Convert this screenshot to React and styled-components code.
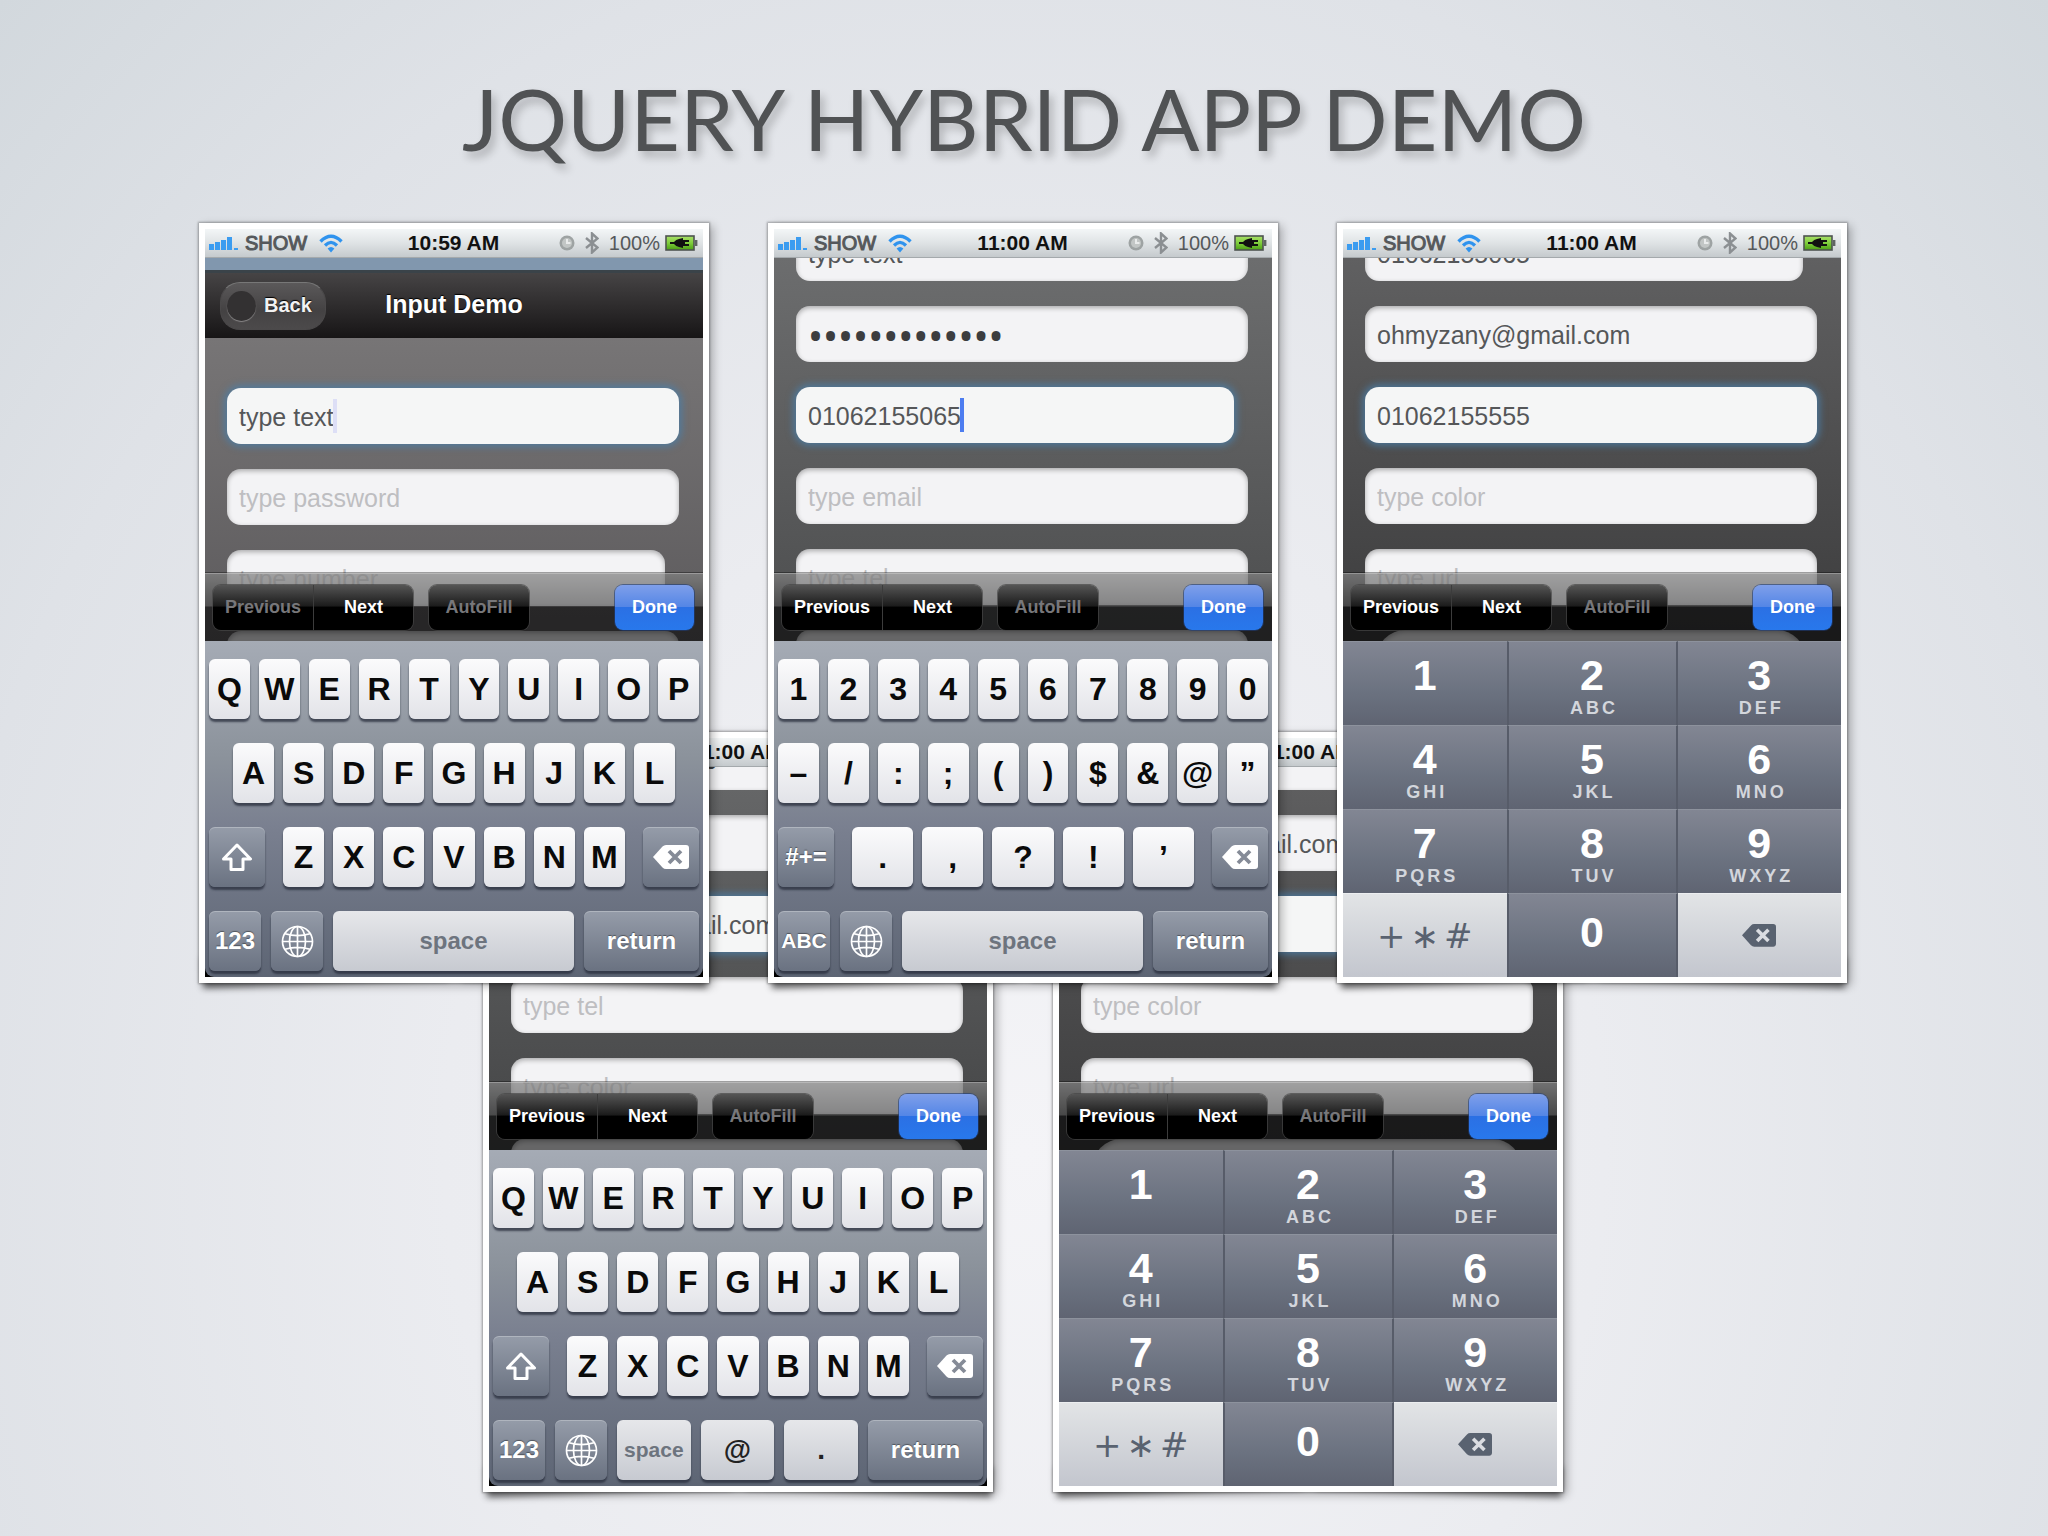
import React from "react";
import styled, { createGlobalStyle, css } from "styled-components";

const GlobalStyle = createGlobalStyle`
  * {
    box-sizing: border-box;
  }

  body {
    margin: 0;
    font-family: "Liberation Sans", Arial, sans-serif;
  }

  button,
  input {
    font-family: inherit;
    margin: 0;
    border: 0;
    outline: 0;
  }
`;

/* ---------- slide ---------- */

const Slide = styled.main`
  min-height: 100vh;
  padding-bottom: 40px;
  background: radial-gradient(
    ellipse at 50% 75%,
    #f4f4f7 0%,
    #ebecf0 40%,
    #dfe2e7 75%,
    #d2d8dd 100%
  );
`;

const Title = styled.h1`
  margin: 0;
  padding-top: 58px;
  height: 223px;
  color: #505254;
  font-family: Lato, "Open Sans", sans-serif;
  font-size: 86px;
  font-weight: 400;
  line-height: 120px;
  text-align: center;
  white-space: nowrap;
  text-shadow: 4px 6px 8px rgba(0, 0, 0, 0.22);
`;

const FrontRow = styled.section`
  position: relative;
  z-index: 1;
  display: grid;
  grid-template-columns: repeat(3, 1fr);
  gap: 59px;
  margin: 0 201px 0 199px;
`;

const BackRow = styled.section`
  display: grid;
  grid-template-columns: repeat(2, 1fr);
  gap: 60px;
  margin: -251px 485px 0 483px;
`;

/* ---------- photo frame with lifted corners ---------- */

const Photo = styled.article`
  position: relative;
  isolation: isolate;

  &::before,
  &::after {
    content: "";
    position: absolute;
    z-index: -1;
    bottom: 14px;
    width: 48%;
    height: 30px;
    box-shadow: 0 15px 6px rgba(0, 0, 0, 0.5);
  }

  &::before {
    left: 3px;
    transform: rotate(-2deg);
  }

  &::after {
    right: 1px;
    transform: rotate(2deg);
  }
`;

const Frame = styled.div`
  border: 6px solid #fff;
  background: #000;
  box-shadow: 0 0 2px 1px rgba(0, 0, 0, 0.3), 4px 3px 9px rgba(0, 0, 0, 0.28);
`;

/* ---------- status bar ---------- */

const StatusBar = styled.header`
  display: grid;
  grid-template-columns: 1fr auto 1fr;
  align-items: center;
  height: 29px;
  padding: 0 5px 0 4px;
  background: linear-gradient(#f3f6f7, #dfe3e5 50%, #c5cacd);
  border-bottom: 1px solid #a4a9ac;
  color: #55585b;
  font-size: 20px;
  line-height: 28px;
`;

const StatusLeft = styled.div`
  display: flex;
  align-items: center;
  gap: 6px;

  svg:last-child {
    margin-left: 6px;
  }
`;

const Carrier = styled.span`
  -webkit-text-stroke: 1px #55585b;
`;

const StatusRight = styled.div`
  display: flex;
  align-items: center;
  justify-content: flex-end;
  gap: 5px;

  svg:nth-child(2) {
    margin: 0 5px;
  }
`;

const Clock = styled.time`
  color: #111;
  font-size: 21px;
  font-weight: 700;
`;

/* ---------- header ---------- */

const Strip = styled.div`
  height: 12px;
  background: #8197ae;
`;

const NavBar = styled.nav`
  display: grid;
  grid-template-columns: 1fr auto 1fr;
  align-items: center;
  height: 68px;
  padding: 0 15px;
  background: linear-gradient(#464445, #2c2a2b 55%, #171516);
  border-top: 3px solid #3a4349;
  color: #fff;
`;

const BackButton = styled.button`
  display: flex;
  align-items: center;
  gap: 8px;
  justify-self: start;
  width: 106px;
  height: 48px;
  padding: 0 6px;
  border: 1px solid #4b494a;
  border-top-color: #777;
  border-radius: 20px;
  background: linear-gradient(#5b595a, #444243 60%, #4c4a4b);
  color: #f2f2f2;
  font-size: 20px;
  font-weight: 700;
  text-shadow: 0 -1px 1px #000;
`;

const BackDot = styled.span`
  width: 29px;
  height: 30px;
  border-radius: 50%;
  background: #333132;
  box-shadow: 0 1px 1px #8a8889;
`;

const NavTitle = styled.h2`
  margin: 0;
  padding-bottom: 4px;
  font-size: 25px;
  line-height: 32px;
  text-shadow: 0 -1px 1px #000;
`;

/* ---------- form ---------- */

const Form = styled.form`
  position: relative;
  height: ${(p) => (p.$short ? "303px" : "383px")};
  padding: ${(p) => (p.$short ? "50px" : "0")} 24px 0 22px;
  overflow: hidden;
  background: ${(p) => p.$tint};
`;

const Fields = styled.div`
  display: flex;
  flex-direction: column;
  gap: 25px;
  margin-top: ${(p) => (p.$scrolled ? "-33px" : "0")};
`;

const FieldBox = styled.div`
  position: relative;
  display: flex;
  padding-right: ${(p) => (p.$narrow ? "14px" : "0")};
  ${(p) => p.$round && "padding: 0 12px;"}
`;

const Input = styled.input`
  width: 100%;
  height: 56px;
  padding: 2px 12px 0;
  border-radius: ${(p) => (p.$round ? "28px" : "14px")};
  background: #f3f3f5;
  color: #555759;
  font-size: 25px;
  line-height: 54px;
  box-shadow: inset 0 2px 5px rgba(0, 0, 0, 0.3);

  &::placeholder {
    color: #bebec1;
    opacity: 1;
  }

  &[type="password"] {
    color: #3c3d3f;
    font-family: "Noto Sans", sans-serif;
    font-size: 40px;
  }

  ${(p) =>
    p.$focused &&
    css`
      background: #f5f6f6;
      box-shadow: 0 0 7px 3px rgba(74, 127, 170, 0.75);
    `}
`;

const Caret = styled.span`
  position: absolute;
  top: 11px;
  left: ${(p) => p.$at}px;
  width: 4px;
  height: 34px;
  background: ${(p) => (p.$fading ? "#dddff6" : "#4d7df0")};
`;

/* ---------- bar over the keyboard ---------- */

const AccessoryBar = styled.div`
  position: absolute;
  left: 0;
  right: 0;
  bottom: 0;
  display: flex;
  align-items: flex-start;
  gap: 16px;
  height: 68px;
  padding: 12px 9px 0 8px;
  background: linear-gradient(
      rgba(255, 255, 255, 0.38),
      rgba(255, 255, 255, 0.2) 33px,
      rgba(255, 255, 255, 0) 34px
    ),
    rgba(0, 0, 0, 0.58);
  box-shadow: inset 0 1px 0 rgba(255, 255, 255, 0.25),
    0 -1px 0 rgba(0, 0, 0, 0.35);
`;

const BarGroup = styled.div`
  display: flex;
  border-radius: 8px;
  overflow: hidden;
  box-shadow: 0 0 0 1px rgba(70, 70, 70, 0.7);
`;

const BarButton = styled.button`
  width: 100px;
  height: 45px;
  padding: 0;
  background: linear-gradient(#555, #1c1c1c 46%, #000 50%);
  color: #fff;
  font-size: 18px;
  font-weight: 700;

  & + & {
    border-left: 1px solid #3c3c3c;
  }

  &:disabled {
    color: #77777a;
  }
`;

const DoneButton = styled(BarButton)`
  width: 79px;
  margin-left: auto;
  border-radius: 8px;
  background: linear-gradient(#7f9fea, #5486e6 48%, #2b70e4 50%, #2878ec);
  box-shadow: 0 0 0 1px rgba(30, 60, 120, 0.6);
`;

/* ---------- keyboards ---------- */

const Keyboard = styled.div`
  display: flex;
  flex-direction: column;
  gap: 24px;
  height: 336px;
  padding: 18px 4px 0;
  border-radius: 0 0 9px 9px;
  background: linear-gradient(#a5abb5, #8b929b 35%, #7a8090 55%, #5d6574);
`;

const KeyRow = styled.div`
  display: flex;
  gap: ${(p) => (p.$loose ? "10px" : "9px")};
  padding: 0 ${(p) => (p.$inset ? "24px" : "0")};
`;

const MiddleKeys = styled.div`
  display: flex;
  flex: 1;
  gap: 9px;
  margin: 0 9px;
`;

const Key = styled.button`
  display: flex;
  flex: 1;
  align-items: center;
  justify-content: center;
  min-width: 0;
  height: 60px;
  padding: 0;
  border-radius: 6px;
  background: linear-gradient(#fbfbfc, #e2e3e8);
  box-shadow: 0 3px 2px rgba(40, 46, 60, 0.75);
  color: #0a0a0a;
  font-size: 32px;
  font-weight: 700;
`;

const SpaceKey = styled(Key)`
  background: linear-gradient(#e6e7ea, #c7cad1);
  color: #6d747e;
  font-size: ${(p) => (p.$small ? "21px" : "24px")};
`;

const MarkKey = styled(SpaceKey)`
  color: #222;
  font-size: 28px;
`;

const ActionKey = styled(Key)`
  flex: none;
  width: ${(p) => p.$width}px;
  background: linear-gradient(#959ca9, #6a7281);
  box-shadow: inset 0 1px 0 rgba(255, 255, 255, 0.25),
    0 3px 2px rgba(40, 46, 60, 0.75);
  color: #fff;
  font-size: ${(p) => (p.$small ? "21px" : "24px")};
  text-shadow: 0 -1px 1px rgba(0, 0, 0, 0.4);
`;

const Pad = styled.div`
  display: grid;
  grid-template-columns: 1fr 171px 1fr;
  grid-auto-rows: 84px;
  height: 336px;
  background: #5d626e;
`;

const PadKey = styled.button`
  display: flex;
  flex-direction: column;
  align-items: center;
  justify-content: ${(p) => (p.$centered ? "center" : "flex-start")};
  padding: ${(p) => (p.$centered ? "0 0 8px" : "10px 0 0")};
  border-top: 1px solid #8d929d;
  background: linear-gradient(#828693, #6b7280 60%, #5f6472);
  color: #fff;

  &:nth-child(3n + 2) {
    border-left: 2px solid #575c69;
    border-right: 2px solid #575c69;
  }
`;

const PadDigit = styled.span`
  font-size: 43px;
  font-weight: 700;
  line-height: 46px;
`;

const PadLetters = styled.span`
  padding-left: 4px;
  color: #d3d6dc;
  font-size: 18px;
  font-weight: 700;
  line-height: 20px;
  letter-spacing: 3px;
`;

const LightPadKey = styled.button`
  display: flex;
  align-items: center;
  justify-content: center;
  gap: 5px;
  padding: 0;
  border-top: 1px solid #eceef0;
  background: linear-gradient(#e2e4e6, #c3c6ce);
  color: #596270;
  font-family: "DejaVu Sans", sans-serif;
  font-size: 34px;
`;

/* ---------- drawings ---------- */

const SignalIcon = () => (
  <svg width="30" height="15" viewBox="0 0 30 15" fill="#3b9cf0">
    <rect x="0" y="8" width="5" height="6" />
    <rect x="6" y="6" width="5" height="8" />
    <rect x="12" y="4" width="5" height="10" />
    <rect x="18" y="1" width="5" height="13" />
    <rect x="25" y="12" width="4" height="2" />
  </svg>
);

const WifiIcon = () => (
  <svg width="24" height="19" viewBox="0 0 24 19" fill="none" stroke="#2f93ee">
    <path d="M1.5 7.5 Q12 -3 22.5 7.5" strokeWidth="3.4" />
    <path d="M6 11.5 Q12 5.5 18 11.5" strokeWidth="3.2" />
    <path d="M8.6 14.6 Q12 11.6 15.4 14.6 L12 18.4 Z" fill="#2f93ee" stroke="none" />
  </svg>
);

const AlarmIcon = () => (
  <svg width="16" height="16" viewBox="0 0 16 16">
    <circle cx="8" cy="8" r="7.5" fill="#9ea3a3" />
    <circle cx="8" cy="8" r="5" fill="#c2c6c5" />
    <path d="M8 4 V8 H11.5" fill="none" stroke="#e9ebeb" strokeWidth="2" />
  </svg>
);

const BluetoothIcon = () => (
  <svg width="14" height="22" viewBox="0 0 14 22" fill="none" stroke="#8b8f92" strokeWidth="2.4">
    <path d="M1 6 L12.5 15.5 L7 20.5 V1.5 L12.5 6.5 L1 16" />
  </svg>
);

const BatteryIcon = () => (
  <svg width="33" height="16" viewBox="0 0 33 16">
    <defs>
      <linearGradient id="charge" x1="0" y1="0" x2="0" y2="1">
        <stop offset="0" stopColor="#a9e069" />
        <stop offset="0.5" stopColor="#7fce3c" />
        <stop offset="1" stopColor="#4a9f14" />
      </linearGradient>
    </defs>
    <rect x="1" y="1" width="28" height="14" fill="url(#charge)" stroke="#4e5450" strokeWidth="1.6" />
    <rect x="30" y="5" width="2.4" height="6" fill="#5f6562" />
    <path
      d="M5 7 H9 Q11 4.5 14 4 L18 3 V5 H24 V7 H20 V9 H24 V11 H18 V13 L14 12 Q11 11.5 9 9 H5 Z"
      fill="#111"
    />
  </svg>
);

const ShiftIcon = () => (
  <svg width="32" height="29" viewBox="0 0 32 29" fill="none" stroke="#fff" strokeWidth="3" strokeLinejoin="round">
    <path d="M16 2 L29.5 16 H22 V26.5 H10 V16 H2.5 Z" />
  </svg>
);

const DeleteIcon = ({ size = 36, color = "#fff", cross = "#858b97" }) => (
  <svg width={size} height={(size * 2) / 3} viewBox="0 0 36 24">
    <path
      d="M0 12 L9.5 1.5 Q11 0 13 0 H33 Q36 0 36 3 V21 Q36 24 33 24 H13 Q11 24 9.5 22.5 Z"
      fill={color}
    />
    <path d="M16 6 L28 18 M28 6 L16 18" stroke={cross} strokeWidth="3.8" />
  </svg>
);

const GlobeIcon = () => (
  <svg width="33" height="33" viewBox="0 0 33 33" fill="none" stroke="#fff" strokeWidth="1.7">
    <circle cx="16.5" cy="16.5" r="15" />
    <ellipse cx="16.5" cy="16.5" rx="8" ry="15" />
    <path d="M16.5 1.5 V31.5 M1.5 16.5 H31.5 M4 8.8 Q16.5 12.5 29 8.8 M4 24.2 Q16.5 20.5 29 24.2" />
  </svg>
);

/* ---------- keyboards, put together ---------- */

const Keys = ({ chars }) =>
  chars.map((c) => (
    <Key type="button" key={c}>
      {c}
    </Key>
  ));

const DeleteKey = () => (
  <ActionKey type="button" $width={56} aria-label="Delete">
    <DeleteIcon />
  </ActionKey>
);

const BottomKeys = ({ toggle, email }) => (
  <KeyRow $loose>
    <ActionKey type="button" $width={52} $small={toggle === "ABC"}>
      {toggle}
    </ActionKey>
    <ActionKey type="button" $width={52} aria-label="Next keyboard">
      <GlobeIcon />
    </ActionKey>
    <SpaceKey type="button" $small={email}>
      space
    </SpaceKey>
    {email && (
      <>
        <MarkKey type="button">@</MarkKey>
        <MarkKey type="button">.</MarkKey>
      </>
    )}
    <ActionKey type="button" $width={115}>
      return
    </ActionKey>
  </KeyRow>
);

const LetterKeyboard = ({ email }) => (
  <Keyboard>
    <KeyRow>
      <Keys chars={[..."QWERTYUIOP"]} />
    </KeyRow>
    <KeyRow $inset>
      <Keys chars={[..."ASDFGHJKL"]} />
    </KeyRow>
    <KeyRow>
      <ActionKey type="button" $width={56} aria-label="Shift">
        <ShiftIcon />
      </ActionKey>
      <MiddleKeys>
        <Keys chars={[..."ZXCVBNM"]} />
      </MiddleKeys>
      <DeleteKey />
    </KeyRow>
    <BottomKeys toggle="123" email={email} />
  </Keyboard>
);

const SymbolKeyboard = () => (
  <Keyboard>
    <KeyRow>
      <Keys chars={[..."1234567890"]} />
    </KeyRow>
    <KeyRow>
      <Keys chars={[..."–/:;()$&@”"]} />
    </KeyRow>
    <KeyRow>
      <ActionKey type="button" $width={56}>
        #+=
      </ActionKey>
      <MiddleKeys>
        <Keys chars={[...".,?!’"]} />
      </MiddleKeys>
      <DeleteKey />
    </KeyRow>
    <BottomKeys toggle="ABC" />
  </Keyboard>
);

const padKeys = [
  ["1", ""],
  ["2", "ABC"],
  ["3", "DEF"],
  ["4", "GHI"],
  ["5", "JKL"],
  ["6", "MNO"],
  ["7", "PQRS"],
  ["8", "TUV"],
  ["9", "WXYZ"],
];

const PhonePad = () => (
  <Pad>
    {padKeys.map(([digit, letters]) => (
      <PadKey type="button" key={digit}>
        <PadDigit>{digit}</PadDigit>
        <PadLetters>{letters}</PadLetters>
      </PadKey>
    ))}
    <LightPadKey type="button">
      <span>+</span>
      <span>∗</span>
      <span>#</span>
    </LightPadKey>
    <PadKey type="button" $centered>
      <PadDigit>0</PadDigit>
    </PadKey>
    <LightPadKey type="button" aria-label="Delete">
      <DeleteIcon size={34} color="#596270" cross="#dadce1" />
    </LightPadKey>
  </Pad>
);

/* ---------- phone ---------- */

const Field = ({ label, value, type = "text", focused, caret, fading, narrow, round }) => (
  <FieldBox $narrow={narrow} $round={round}>
    <Input
      type={type}
      aria-label={label}
      placeholder={label}
      defaultValue={value}
      $focused={focused}
      $round={round}
    />
    {caret && <Caret $at={caret} $fading={fading} />}
  </FieldBox>
);

const Phone = ({ time, header, tint, fields, previousOff, children }) => (
  <Photo>
    <Frame>
      <StatusBar>
        <StatusLeft>
          <SignalIcon />
          <Carrier>SHOW</Carrier>
          <WifiIcon />
        </StatusLeft>
        <Clock>{time}</Clock>
        <StatusRight>
          <AlarmIcon />
          <BluetoothIcon />
          <span>100%</span>
          <BatteryIcon />
        </StatusRight>
      </StatusBar>
      {header && (
        <>
          <Strip />
          <NavBar>
            <BackButton type="button">
              <BackDot />
              Back
            </BackButton>
            <NavTitle>{header}</NavTitle>
          </NavBar>
        </>
      )}
      <Form $short={!!header} $tint={tint}>
        <Fields $scrolled={!header}>
          {fields.map((field, i) => (
            <Field key={i} {...field} />
          ))}
        </Fields>
        <AccessoryBar>
          <BarGroup>
            <BarButton type="button" disabled={previousOff}>
              Previous
            </BarButton>
            <BarButton type="button">Next</BarButton>
          </BarGroup>
          <BarGroup>
            <BarButton type="button" disabled>
              AutoFill
            </BarButton>
          </BarGroup>
          <DoneButton type="button">Done</DoneButton>
        </AccessoryBar>
      </Form>
      {children}
    </Frame>
  </Photo>
);

const textFields = [
  { label: "type text", value: "type text", focused: true, caret: 106, fading: true },
  { label: "type password" },
  { label: "type number", narrow: true },
  { label: "" },
];

const numberFields = [
  { label: "type text", value: "type text" },
  { label: "type password", value: "ohmyzany12345", type: "password" },
  { label: "type number", value: "01062155065", focused: true, caret: 164, narrow: true },
  { label: "type email" },
  { label: "type tel" },
  { label: "" },
];

const emailFields = [
  { label: "type password", value: "ohmyzany12345", type: "password" },
  { label: "type number", value: "01062155065", narrow: true },
  { label: "type email", value: "ohmyzany@gmail.com", focused: true },
  { label: "type tel" },
  { label: "type color" },
  { label: "" },
];

const telFields = [
  { label: "type number", value: "01062155065", narrow: true },
  { label: "type email", value: "ohmyzany@gmail.com" },
  { label: "type tel", value: "01062155555", focused: true },
  { label: "type color" },
  { label: "type url" },
  { label: "", round: true },
];

const App = () => {
  return (
    <>
      <GlobalStyle />
      <Slide>
        <Title>JQUERY HYBRID APP DEMO</Title>
        <FrontRow>
          <Phone
            time="10:59 AM"
            header="Input Demo"
            tint="linear-gradient(#777576, #5c5a5c)"
            fields={textFields}
            previousOff
          >
            <LetterKeyboard />
          </Phone>
          <Phone
            time="11:00 AM"
            tint="linear-gradient(#6c6d6e, #4c4d4e)"
            fields={numberFields}
          >
            <SymbolKeyboard />
          </Phone>
          <Phone
            time="11:00 AM"
            tint="linear-gradient(#606061, #3c3c3d)"
            fields={telFields}
          >
            <PhonePad />
          </Phone>
        </FrontRow>
        <BackRow>
          <Phone
            time="11:00 AM"
            tint="linear-gradient(#676869, #444546)"
            fields={emailFields}
          >
            <LetterKeyboard email />
          </Phone>
          <Phone
            time="11:00 AM"
            tint="linear-gradient(#606061, #3c3c3d)"
            fields={telFields}
          >
            <PhonePad />
          </Phone>
        </BackRow>
      </Slide>
    </>
  );
};

export default App;
